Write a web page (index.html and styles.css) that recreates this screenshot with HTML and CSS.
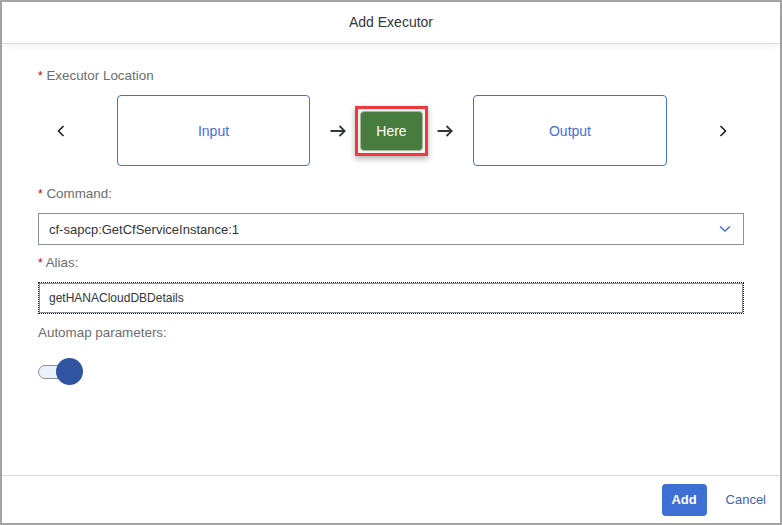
FILE: index.html
```html
<!DOCTYPE html>
<html>
<head>
<meta charset="utf-8">
<link rel="stylesheet" href="styles.css">
</head>
<body>
<div class="dialog">
  <header class="dlg-header">Add Executor</header>
  <main class="dlg-content">
    <div class="label"><span class="req">*</span> Executor Location</div>
    <div class="location-row">
      <svg class="chev chev-left" width="8" height="12" viewBox="0 0 8 12"><path d="M6.5 1 L1.5 6 L6.5 11" fill="none" stroke="#1d1d1d" stroke-width="1.6"/></svg>
      <div class="loc-box loc-in">Input</div>
      <svg class="arrow arrow-1" width="16" height="12" viewBox="0 0 16 12"><path d="M0.5 6 H14.5 M9.5 1 L14.8 6 L9.5 11" fill="none" stroke="#32363a" stroke-width="1.8"/></svg>
      <div class="here-outline"><div class="here-btn">Here</div></div>
      <svg class="arrow arrow-2" width="16" height="12" viewBox="0 0 16 12"><path d="M0.5 6 H14.5 M9.5 1 L14.8 6 L9.5 11" fill="none" stroke="#32363a" stroke-width="1.8"/></svg>
      <div class="loc-box">Output</div>
      <svg class="chev chev-right" width="8" height="12" viewBox="0 0 8 12"><path d="M1.5 1 L6.5 6 L1.5 11" fill="none" stroke="#1d1d1d" stroke-width="1.6"/></svg>
    </div>

    <div class="label label-cmd"><span class="req">*</span> Command:</div>
    <div class="field select">
      <span>cf-sapcp:GetCfServiceInstance:1</span>
      <svg width="12" height="8" viewBox="0 0 12 8"><path d="M1 1.5 L6 6 L11 1.5" fill="none" stroke="#3f6ccf" stroke-width="1.4"/></svg>
    </div>

    <div class="label label-alias"><span class="req">*</span> Alias:</div>
    <div class="field alias">getHANACloudDBDetails</div>

    <div class="label label-auto">Automap parameters:</div>
    <div class="toggle"><div class="track"></div><div class="knob"></div></div>
  </main>
  <footer class="dlg-footer">
    <button class="btn-add">Add</button>
    <button class="btn-cancel">Cancel</button>
  </footer>
</div>
</body>
</html>
```

FILE: styles.css
```css
* { box-sizing: border-box; }
html, body { margin: 0; padding: 0; background: #fff; }
body { font-family: "Liberation Sans", Arial, sans-serif; color: #32363a; }

.dialog {
  width: 782px;
  height: 525px;
  border: 2px solid #a3a3a3;
  display: flex;
  flex-direction: column;
  background: #fff;
}

.dlg-header {
  height: 42px;
  flex: none;
  border-bottom: 1px solid #d9d9d9;
  display: flex;
  align-items: center;
  justify-content: center;
  font-size: 14px;
  color: #32363a;
  position: relative;
  z-index: 1;
  box-shadow: 0 4px 8px -2px rgba(0,0,0,0.07);
  padding-bottom: 1px;
}

.dlg-content {
  flex: 1;
  padding: 24px 36px 0 36px;
}

.label {
  font-size: 13.4px;
  color: #6a6d70;
  line-height: 16px;
  height: 16px;
}
.req { color: #bb0000; font-size: 12px; }

.location-row {
  display: flex;
  align-items: center;
  margin-top: 11px;
  height: 71px;
}
.chev-left { margin-left: 19px; margin-right: 52px; }
.loc-box {
  width: 194px;
  height: 71px;
  border: 1px solid #3f6fd8;
  border-radius: 4px;
  display: flex;
  align-items: center;
  justify-content: center;
  font-size: 14px;
  color: #3f6fd8;
}
.loc-in { width: 193px; }
.arrow-1 { margin-left: 20px; margin-right: 9px; }
.arrow-2 { margin-left: 9px; margin-right: 20px; }
.here-outline {
  width: 73px;
  height: 50px;
  border: 3px solid #f0393d;
  padding: 2px;
  box-shadow: 0 3px 6px rgba(0,0,0,0.3);
  background: #f2f2f2;
  margin-top: 1px;
}
.here-btn {
  width: 100%;
  height: 100%;
  background: #487c3e;
  border: 1px solid #a4b89e;
  border-radius: 4px;
  color: #fff;
  font-size: 14px;
  display: flex;
  align-items: center;
  justify-content: center;
}
.chev-right { margin-left: 52px; }

.label-cmd { margin-top: 20px; }
.field {
  height: 32px;
  border: 1px solid #89919a;
  margin-top: 11px;
  display: flex;
  align-items: center;
  padding: 0 10px;
  font-size: 12px;
  color: #32363a;
  width: 706px;
}
.select { justify-content: space-between; padding-right: 12px; font-size: 13px; }
.label-alias { margin-top: 10px; }
.alias { border: 1px dotted #1a1a1a; outline: 1px solid #89919a; outline-offset: -2px; }
.label-auto { margin-top: 11px; }

.toggle {
  position: relative;
  width: 48px;
  height: 27px;
  margin-top: 17px;
}
.track {
  position: absolute;
  left: 0;
  top: 7px;
  width: 40px;
  height: 14px;
  border: 1px solid #89919a;
  border-radius: 7px;
  background: #ebf1fb;
}
.knob {
  position: absolute;
  left: 18px;
  top: 0;
  width: 27px;
  height: 27px;
  border-radius: 50%;
  background: #30549f;
}

.dlg-footer {
  height: 48px;
  flex: none;
  border-top: 1px solid #d9d9d9;
  display: flex;
  align-items: center;
  justify-content: flex-end;
  padding-right: 8px;
  gap: 13px;
}
.btn-add {
  width: 45px;
  height: 32px;
  background: #3e6fd2;
  color: #fff;
  border: none;
  border-radius: 4px;
  font-family: "Liberation Sans", Arial, sans-serif;
  font-weight: bold;
  font-size: 13px;
}
.btn-cancel {
  height: 32px;
  background: transparent;
  border: none;
  color: #3e5fae;
  font-family: "Liberation Sans", Arial, sans-serif;
  font-size: 13px;
  padding: 0 6px;
}
```
